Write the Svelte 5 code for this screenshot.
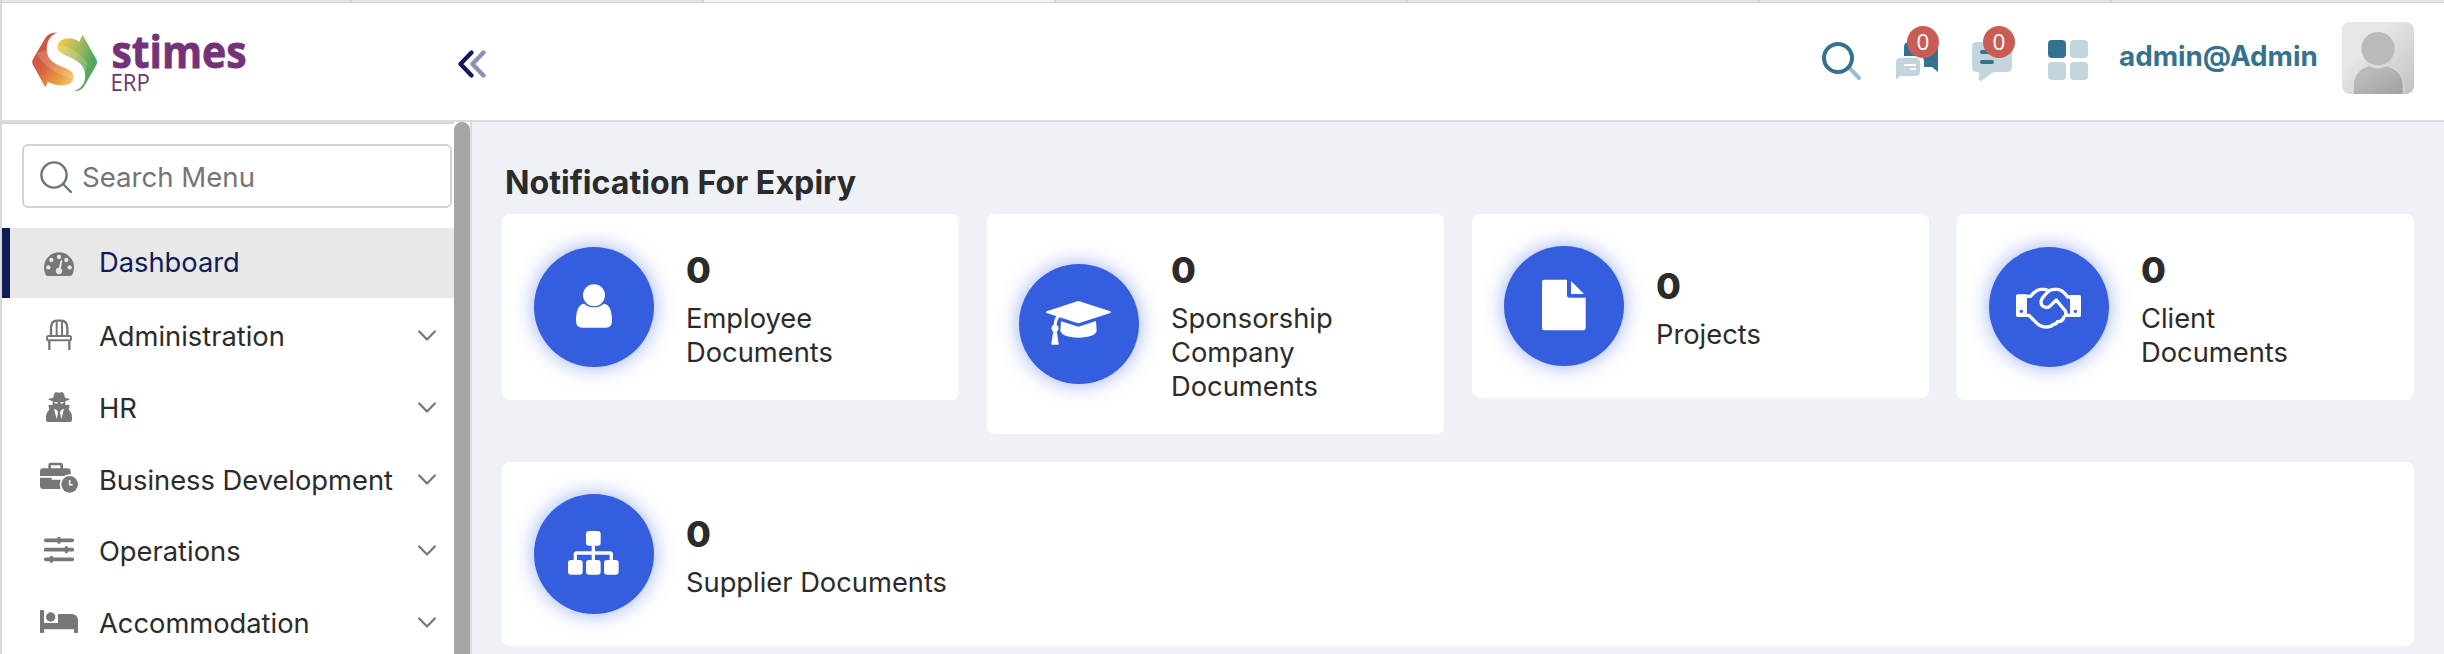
<script>
  const menu = [
    { icon: 'gauge', label: 'Dashboard', active: true },
    { icon: 'chair', label: 'Administration' },
    { icon: 'agent', label: 'HR' },
    { icon: 'briefcase', label: 'Business Development' },
    { icon: 'sliders', label: 'Operations' },
    { icon: 'bed', label: 'Accommodation' }
  ];

  const cards = [
    { icon: 'user', count: 0, label: 'Employee Documents' },
    { icon: 'cap', count: 0, label: 'Sponsorship Company Documents' },
    { icon: 'file', count: 0, label: 'Projects' },
    { icon: 'handshake', count: 0, label: 'Client Documents' },
    { icon: 'sitemap', count: 0, label: 'Supplier Documents', wide: true }
  ];

  const tabs = [0, 1, 2, 3, 4, 5, 6];
</script>

<div class="page">
  <div class="tabstrip">
    {#each tabs as t}
      <div class="tab" class:current={t === 2}></div>
    {/each}
  </div>

  <header>
    <div class="logo">
      <svg width="68" height="64" viewBox="0 0 68 64">
        <defs>
          <linearGradient id="warm" x1="0.25" y1="0.15" x2="0.95" y2="0.9">
            <stop offset="0" stop-color="#cb5244" />
            <stop offset="0.35" stop-color="#d4633f" />
            <stop offset="0.7" stop-color="#e5953f" />
            <stop offset="1" stop-color="#f2c65a" />
          </linearGradient>
          <linearGradient id="cool" x1="0" y1="0.2" x2="0.85" y2="0.6">
            <stop offset="0" stop-color="#f1cb50" />
            <stop offset="0.5" stop-color="#a9bb5b" />
            <stop offset="1" stop-color="#4fa862" />
          </linearGradient>
        </defs>
        <g transform="translate(-30 -30) scale(0.33333)">
          <path fill="url(#warm)" d="M174 97Q150 94 137 112L98 179Q95 186 98 193L137 264L144 246Q165 258 190 257Q224 255 223 232C223 217 212 210 190 201C157 189 141 174 141 147C141 125 150 103 174 97Z" />
          <path fill="#fff" opacity="0.17" d="M110 159Q140 215 222 238C223 217 212 210 190 201C157 189 141 174 141 150Q128 152 110 159Z" />
          <path fill="url(#cool)" d="M250 103L292 178Q296 187 292 195L255 260Q245 276 222 275C247 268 258 250 258 228C258 205 244 187 221 176C196 164 173 158 173 138Q178 115 208 114Q227 114 240 125Z" />
          <path fill="#fff" opacity="0.17" d="M174 133Q235 145 264 190Q262 205 257 218C253 200 241 185 221 176C196 164 173 158 174 133Z" />
        </g>
      </svg>
      <svg class="words" width="140" height="64" viewBox="0 0 140 64">
        <text class="brand" x="1.5" y="37.5" textLength="135" lengthAdjust="spacingAndGlyphs">stimes</text>
        <text class="sub" x="0.5" y="61" textLength="39.5" lengthAdjust="spacingAndGlyphs">ERP</text>
      </svg>
    </div>

    <svg class="collapse" width="30" height="28" viewBox="0 0 30 28">
      <path d="M26.5 2.5L15.500 14L26.5 25.500" stroke="#8a90b3" />
      <path d="M14.5 2.5L3.500 14L14.5 25.500" stroke="#0f1b5b" />
    </svg>

    <div class="tools">
      <svg class="find" width="40" height="40" viewBox="0 0 40 40">
        <path d="M29 27.5L38 37" stroke="#9cbccb" stroke-width="4" stroke-linecap="round" />
        <circle cx="17" cy="17" r="14" fill="none" stroke="#35728f" stroke-width="4" />
      </svg>
      <div class="notice chats">
        <svg width="42" height="38" viewBox="0 0 42 38">
          <path fill="#35728f" d="M8 12V5Q8 0 13 0H37Q42 0 42 5V30L36 25H28V20Q28 14 23 14H8Z" />
          <path fill="#c2d4dc" d="M4 16H20Q24 16 24 20V30Q24 34 20 34H4L0 37.5V20Q0 16 4 16Z" />
          <path stroke="#fff" stroke-width="2" stroke-linecap="round" d="M9 23H19M15 27H19" />
        </svg>
        <span class="badge">0</span>
      </div>
      <div class="notice">
        <svg width="40" height="40" viewBox="0 0 40 40">
          <path fill="#c2d4dc" d="M5 0H35Q40 0 40 5V25Q40 30 35 30H24Q20 30 16 34L9 39Q7 39 7 37V30H5Q0 30 0 25V5Q0 0 5 0Z" />
          <path stroke="#35728f" stroke-width="4" stroke-linecap="round" d="M10 10H30M10 20H20" />
        </svg>
        <span class="badge">0</span>
      </div>
      <div class="grid"><i class="on"></i><i></i><i></i><i></i></div>
      <span class="who">admin@Admin</span>
      <svg class="avatar" width="72" height="72" viewBox="0 0 216 216">
        <defs>
          <linearGradient id="photo" x1="0.4" y1="0.3" x2="1" y2="0.9">
            <stop offset="0" stop-color="#e5e6e7" />
            <stop offset="1" stop-color="#c3c4c6" />
          </linearGradient>
          <linearGradient id="torso" x1="0" y1="0" x2="1" y2="1">
            <stop offset="0.3" stop-color="#b9babd" />
            <stop offset="1" stop-color="#9fa0a4" />
          </linearGradient>
        </defs>
        <rect width="216" height="216" fill="url(#photo)" />
        <path fill="url(#torso)" stroke="#dddee0" stroke-width="3" d="M34 218V190C34 158 56 138 82 131Q107 144 133 131C162 138 184 158 184 190V218Z" />
        <circle cx="108" cy="80" r="50" fill="#b9babd" />
      </svg>
    </div>
  </header>

  <div class="body">
    <nav>
      <div class="menu">
        <div class="search">
          <svg width="36" height="36" viewBox="0 0 36 36">
            <circle cx="16" cy="16" r="12.6" />
            <path d="M25 25L33 33" />
          </svg>
          <span>Search Menu</span>
        </div>
        {#each menu as item}
          <div class="item" class:active={item.active}>
            <svg class="glyph" width="38" height="40" viewBox="0 0 114 120">
              {#if item.icon === 'gauge'}
                <path d="M24 99Q19 99 17 95Q12 86 12 73A45 45 0 0 1 102 73Q102 86 97 95Q95 99 90 99Z" />
                <g fill="#e8e8e8">
                  <circle cx="57" cy="42" r="6.5" /><circle cx="34" cy="51" r="6.5" /><circle cx="79" cy="51" r="6.5" />
                  <circle cx="25" cy="73" r="6.5" /><circle cx="89" cy="73" r="6.5" /><circle cx="57" cy="84" r="9.5" />
                </g>
                <path d="M58 82L64 55" stroke="#e8e8e8" stroke-width="6" stroke-linecap="round" />
              {:else if item.icon === 'chair'}
                <g class="line">
                  <path stroke-width="7" d="M33 56V34Q33 11 50 11H64Q82 11 82 34V56" />
                  <path stroke-width="6" d="M50 11V56M66 11V56" />
                  <path stroke-width="7" d="M28 70V99M88 70V99" />
                  <rect x="21" y="57" width="72" height="13" rx="5" stroke-width="6" fill="#fff" />
                </g>
              {:else if item.icon === 'agent'}
                <path d="M24 31Q30 27 40 26Q42 10 48 9Q57 13 66 9Q72 10 75 26Q86 28 90 31Q80 38 57 38Q34 38 24 31Z" />
                <path d="M38 36H76V48Q70 62 57 62Q44 62 38 48Z" />
                <path d="M25 48H40L57 56L74 48H89L86 62Q96 70 96 84V92Q96 99 88 99H26Q18 99 18 92V84Q18 70 28 62Z" />
                <path fill="#fff" d="M42 39H53L52 44Q45 46 42 39ZM72 39H61L62 44Q69 46 72 39ZM42 59L51 64L54 70L50 91ZM72 59L63 64L60 70L64 91Z" />
              {:else if item.icon === 'briefcase'}
                <path class="line" stroke-width="8" d="M29 24V12Q29 9 33 9H61Q65 9 65 12V24" />
                <path d="M9 22H82Q92 22 92 32V45H0V32Q0 22 9 22Z" />
                <path d="M0 50H35V56H62V84H9Q0 84 0 75Z" />
                <circle cx="89" cy="70" r="30" fill="#fff" />
                <circle cx="89" cy="70" r="25" />
                <path d="M89 57V71H98" fill="none" stroke="#fff" stroke-width="4.5" />
              {:else if item.icon === 'sliders'}
                <g class="line" stroke-linecap="round">
                  <path stroke-width="11" d="M17 25H97M17 53H97M17 82H97" />
                  <path stroke-width="10" d="M57 19V31M79 47V59M34 76V88" />
                </g>
              {:else}
                <path d="M0 20Q0 18 2 18H10Q12 18 12 20V57H54V30H94Q114 30 114 51V85Q114 87 112 87H104Q102 87 102 85V76H12V85Q12 87 10 87H2Q0 87 0 85Z" />
                <circle cx="32" cy="39" r="14" />
              {/if}
            </svg>
            <span class="label">{item.label}</span>
            {#if !item.active}
              <svg class="chev" width="18" height="12" viewBox="0 0 18 12"><path d="M1.2 1.5L9 9.5L16.8 1.5" /></svg>
            {/if}
          </div>
        {/each}
      </div>
      <div class="track"><div class="thumb"></div></div>
    </nav>

    <main>
      <h1>Notification For Expiry</h1>
      <div class="cards">
        {#each cards as card}
          <section class="card" class:wide={card.wide}>
            <div class="disc">
              <svg width="120" height="120" viewBox="0 0 360 360">
                {#if card.icon === 'user'}
                  <circle cx="180" cy="144.500" r="33" />
                  <path d="M150 170Q163 181 180 181Q197 181 210 170C228 171 234 196 234 221Q234 242 215 242H145Q126 242 126 221C126 196 132 171 150 170Z" />
                {:else if card.icon === 'cap'}
                  <path d="M175 111.500Q178 110.500 181 111.500L274 142Q278 145 274 147L181 177Q178 178 175 177L83 147Q79 145 83 142Z" />
                  <path d="M126 172L178 188L231 171L233 201Q228 220 178 221Q130 220 124 201Z" />
                  <path fill="none" stroke="#fff" stroke-width="9" d="M121 155Q109 162 108 188" />
                  <circle cx="108" cy="193" r="10.500" />
                  <path d="M103 200L97 239Q97 242 99 242H117Q119 242 119 239L113 200Z" />
                {:else if card.icon === 'file'}
                  <path d="M121 101H189V147Q189 155 197 155H245V246Q245 253 238 253H121Q114 253 114 246V108Q114 101 121 101Z" />
                  <path d="M201 105L240 144H201Z" />
                {:else if card.icon === 'handshake'}
                  <path fill-rule="evenodd" d="M86 142H114V210H86Q81 210 81 205V147Q81 142 86 142ZM97 188a5 5 0 1 0 .1 0ZM243 144H271Q276 144 276 149V205Q276 210 271 210H243ZM259 188a5 5 0 1 0 .1 0Z" />
                  <g fill="none" stroke="#fff" stroke-width="10" stroke-linejoin="round">
                    <path d="M112 148H125Q141 128 155 127H165Q173 127 180 132" />
                    <path d="M245 150H236Q221 128 205 127H193Q181 128 173 138L161 152Q153 163 158 174Q168 186 181 179L202 159L229 192Q233 199 229 205H245" />
                    <path d="M112 205H120L148 233Q161 242 175 240Q187 240 193 232Q203 232 205 224Q221 225 226 207" />
                  </g>
                {:else}
                  <rect x="156" y="111" width="44" height="44" rx="9" />
                  <rect x="102" y="198" width="44" height="44" rx="9" />
                  <rect x="156" y="198" width="44" height="44" rx="9" />
                  <rect x="210" y="198" width="44" height="44" rx="9" />
                  <path fill="none" stroke="#fff" stroke-width="10" d="M178 150V202M124 202V182Q124 177 129 177H227Q232 177 232 182V202" />
                {/if}
              </svg>
            </div>
            <div class="info">
              <strong>{card.count}</strong>
              <p>{card.label}</p>
            </div>
          </section>
        {/each}
      </div>
    </main>
  </div>
</div>

<style>
  :global(body) { margin: 0; overflow: hidden; }
  .page {
    width: 2444px;
    height: 654px;
    box-sizing: border-box;
    border-left: 2px solid #d9d9d9;
    display: flex;
    flex-direction: column;
    overflow: hidden;
    background: #fff;
    color: #2b2b2b;
    font-family: Inter, "Liberation Sans", sans-serif;
    font-size: 27.3px;
  }
  .tabstrip {
    height: 3px;
    flex: none;
    box-sizing: border-box;
    display: grid;
    grid-template-columns: 350px repeat(5, 352px) 1fr;
    border-bottom: 1px solid #d3d3d3;
    background: #e7e7e7;
  }
  .tab { border-right: 2px solid #d3d3d3; }
  .tab.current { background: #f3f3f3; }
  .tab:last-child { border: 0; }

  header {
    height: 119px;
    flex: none;
    box-sizing: border-box;
    border-bottom: 2px solid #dcdcdc;
    display: flex;
    align-items: flex-start;
    padding-right: 30px;
  }
  .logo { margin: 27px 0 0 28px; width: 220px; flex: none; display: flex; gap: 13px; }
  .words { overflow: visible; }
  .brand { font-family: "Open Sans", "Noto Sans", sans-serif; font-weight: 700; font-size: 45px; fill: #743279; stroke: #743279; stroke-width: 0.8px; }
  .sub { font-family: "Open Sans", "Noto Sans", sans-serif; font-size: 23px; fill: #743279; }
  .collapse { margin: 47px 0 0 207px; flex: none; }
  .collapse path { fill: none; stroke-width: 4.2; stroke-linecap: round; stroke-linejoin: round; }

  .tools { margin-left: auto; display: flex; align-items: flex-start; }
  .find { margin: 38px 35px 0 0; }
  .notice { position: relative; margin: 39px 36px 0 0; height: 40px; width: 40px; }
  .chats { width: 42px; margin-right: 34px; }
  .notice svg { display: block; }
  .badge {
    position: absolute;
    left: 11px;
    top: -16px;
    width: 32px;
    height: 32px;
    border-radius: 50%;
    background: #c95d55;
    color: #fff;
    font-family: "Open Sans", sans-serif;
    font-size: 22.5px;
    line-height: 32px;
    text-align: center;
  }
  .grid { display: grid; grid-template-columns: 18px 18px; grid-auto-rows: 18px; gap: 4px; margin: 37px 31px 0 0; }
  .grid i { border-radius: 4px; background: #c2d4dc; }
  .grid i.on { background: #35728f; }
  .who { color: #35728f; font-size: 27.8px; font-weight: 700; line-height: 34px; margin-top: 36px; width: 223px; white-space: nowrap; }
  .avatar { border-radius: 8px; margin-top: 19px; }

  .body { flex: 1; display: flex; min-height: 0; }
  nav { width: 470px; flex: none; box-sizing: border-box; border-right: 2px solid #dcdcdc; display: flex; }
  .menu { width: 452px; box-sizing: border-box; border-top: 2px solid #d6d6d6; }
  .track { width: 16px; }
  .thumb { height: 100%; background: #a5a5a5; border-radius: 8px 8px 0 0; }
  .search {
    margin: 20px 2px 20px 20px;
    height: 64px;
    box-sizing: border-box;
    border: 2px solid #ced4da;
    border-radius: 6px;
    display: flex;
    align-items: center;
    color: #757575;
  }
  .search span { padding-top: 2px; font-size: 27.6px; }
  .search svg { margin: 2px 8px 0 14px; fill: none; stroke: #6c757d; stroke-width: 2.4; stroke-linecap: round; }
  .item {
    height: 70px;
    margin-bottom: 1.8px;
    box-sizing: border-box;
    border-left: 8px solid transparent;
    padding: 0 18px 0 30px;
    display: flex;
    align-items: center;
  }
  .item.active { background: #e8e8e8; border-color: #0f1b5b; color: #0f1b5b; margin-bottom: 4px; }
  .glyph { fill: #777; margin-right: 21px; flex: none; overflow: visible; }
  .glyph .line { fill: none; stroke: #777; }
  .label { flex: 1; white-space: nowrap; line-height: 34px; }
  .chev { fill: none; stroke: #777; stroke-width: 2.3; stroke-linecap: round; stroke-linejoin: round; margin-top: -2px; }

  main { flex: 1; background: #eef1f6; padding: 41px 30px 0; }
  h1 { margin: 0 0 11px 3px; font-size: 32.2px; font-weight: 700; line-height: 40px; }
  .cards { display: grid; grid-template-columns: repeat(4, 457px); gap: 28px; align-items: start; }
  .card {
    background: #fff;
    border-radius: 8px;
    padding: 32px;
    display: flex;
    align-items: center;
    gap: 32px;
  }
  .card.wide { grid-column: 1 / -1; }
  .disc {
    width: 120px;
    height: 120px;
    flex: none;
    border-radius: 50%;
    background: #355edf;
    box-shadow: 0 0 20px rgba(53, 94, 223, 0.5);
  }
  .disc svg { display: block; fill: #fff; }
  .info { width: 180px; }
  .wide .info { width: auto; }
  strong { display: block; font-size: 36px; font-weight: 800; line-height: 46px; padding-top: 1px; margin-bottom: 9px; }
  p { margin: 0 0 -2px; line-height: 34px; }
</style>
